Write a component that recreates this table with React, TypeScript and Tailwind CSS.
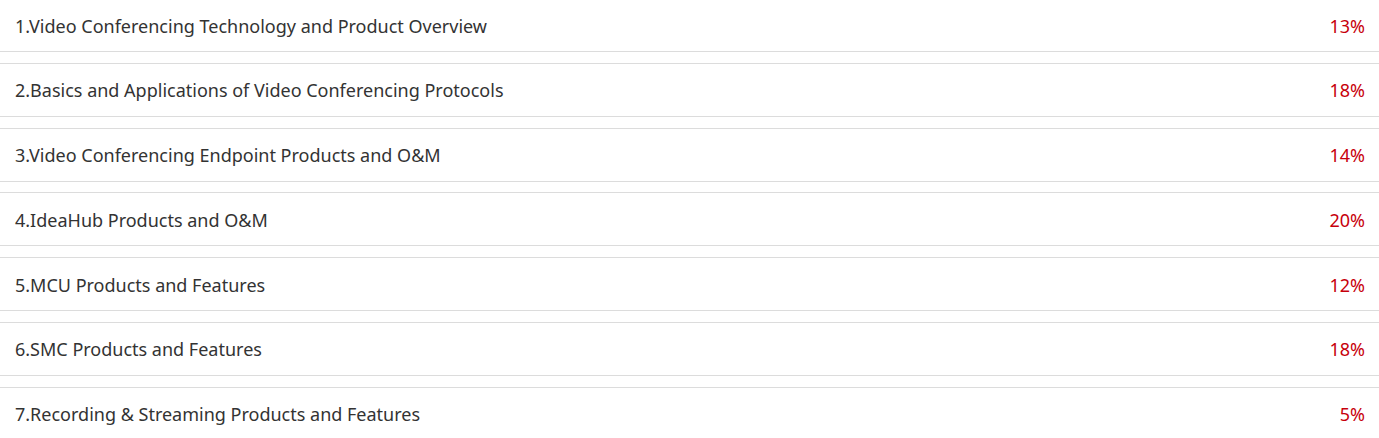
const rows = [
  { name: "1.Video Conferencing Technology and Product Overview", pct: "13%" },
  { name: "2.Basics and Applications of Video Conferencing Protocols", pct: "18%" },
  { name: "3.Video Conferencing Endpoint Products and O&M", pct: "14%" },
  { name: "4.IdeaHub Products and O&M", pct: "20%" },
  { name: "5.MCU Products and Features", pct: "12%" },
  { name: "6.SMC Products and Features", pct: "18%" },
  { name: "7.Recording & Streaming Products and Features", pct: "5%" },
];

function App() {
  return (
    <div className="h-[438px] overflow-hidden bg-white font-['Noto_Sans',sans-serif]">
      <div className="-mt-[2px] flex flex-col gap-[10.8px]">
        {rows.map((row) => (
          <div
            key={row.name}
            className="flex h-[54px] items-center justify-between border-y border-[#dcdcdc] pt-[2px] pl-[15px] pr-[14px] text-[18px]"
          >
            <span className="text-[#333333]">{row.name}</span>
            <span className="text-[#c7000b]">{row.pct}</span>
          </div>
        ))}
      </div>
    </div>
  );
}

export default App;
